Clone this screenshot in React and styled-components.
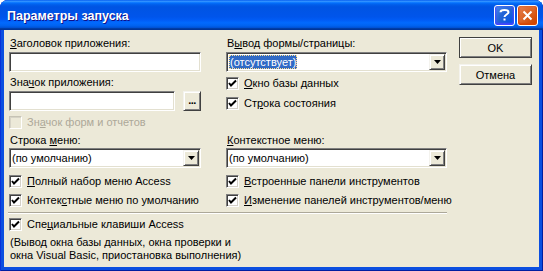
import React from "react";
import styled, { createGlobalStyle } from "styled-components";

const GlobalStyle = createGlobalStyle`
  html, body {
    margin: 0;
    padding: 0;
    overflow: hidden;
    background: #ffffff;
  }
  * {
    box-sizing: border-box;
  }
`;

const Window = styled.div`
  width: 543px;
  height: 271px;
  display: flex;
  flex-direction: column;
  background: #0b4fe0;
  border-radius: 8px 8px 0 0;
  box-shadow: inset 1px 0 #0831d9, inset -1px 0 #001ea0, inset 0 -1px #001ea0;
  font-family: "Liberation Sans", Arial, sans-serif;
  font-size: 11px;
  color: #000;
`;

const TitleBar = styled.div`
  height: 30px;
  flex: none;
  display: flex;
  align-items: center;
  justify-content: space-between;
  padding: 0 5px 0 7px;
  border-radius: 8px 8px 0 0;
  background: linear-gradient(
    to bottom,
    #0058ee 0%,
    #3593ff 4%,
    #288eff 6%,
    #127dff 8%,
    #036ffc 10%,
    #0262ee 14%,
    #0057e5 20%,
    #0054e3 24%,
    #0055eb 56%,
    #005bf5 66%,
    #026afe 76%,
    #0062ef 86%,
    #0052d6 92%,
    #0040ab 94%,
    #003092 100%
  );
`;

const Title = styled.div`
  color: #fff;
  font-weight: bold;
  font-size: 12.5px;
  text-shadow: 1px 1px #0f1089;
  padding-top: 1px;
`;

const Controls = styled.div`
  display: flex;
  gap: 2px;
`;

const CtrlButton = styled.div`
  width: 21px;
  height: 21px;
  border: 1px solid #fff;
  border-radius: 3px;
  display: flex;
  align-items: center;
  justify-content: center;
  background: ${({ $variant }) =>
    $variant === "close"
      ? "radial-gradient(circle at 90% 90%, #cc4600 0%, #dc6527 55%, #e58458 100%)"
      : "radial-gradient(circle at 90% 90%, #0054e9 0%, #2263d5 55%, #4f8cf0 100%)"};
  box-shadow: inset 0 -1px 2px 1px ${({ $variant }) => ($variant === "close" ? "#da4600" : "#4646ff")};
`;

const Body = styled.div`
  flex: 1;
  margin: 0 4px 4px 4px;
  background: #ece9d8;
  display: flex;
  padding: 6px 7px 0 5px;
`;

const Main = styled.div`
  width: 438px;
  display: flex;
  flex-direction: column;
`;

const Grid = styled.div`
  display: grid;
  grid-template-columns: 192px 221px;
  column-gap: 25px;
  margin-top: ${({ $mt }) => $mt || 0}px;
`;

const Column = styled.div`
  display: flex;
  flex-direction: column;
`;

const Label = styled.div`
  height: 14px;
  line-height: 14px;
  padding-left: 1px;
  white-space: nowrap;
  margin-top: ${({ $mt }) => $mt || 0}px;
`;

const Sunken = styled.div`
  height: 20px;
  background: #fff;
  border: 1px solid;
  border-color: #7f7f7f #fff #fff #7f7f7f;
  box-shadow: inset 1px 1px #404040, inset -1px -1px #e3e0d0;
  margin-top: ${({ $mt }) => $mt || 0}px;
`;

const TextBox = styled(Sunken)`
  width: ${({ $w }) => ($w ? `${$w}px` : "100%")};
`;

const InputRow = styled.div`
  display: flex;
  justify-content: space-between;
  margin-top: ${({ $mt }) => $mt || 0}px;
`;

const Raised = styled.div`
  background: #ece9d8;
  border: 1px solid;
  border-color: #f4f3ee #404040 #404040 #f4f3ee;
  box-shadow: inset 1px 1px #fff, inset -1px -1px #808080;
  display: flex;
  align-items: center;
  justify-content: center;
`;

const BrowseButton = styled(Raised)`
  width: 18px;
  height: 20px;
  font-weight: bold;
  font-size: 11px;
  letter-spacing: -0.5px;
  line-height: 1;
  padding-bottom: 2px;
`;

const Combo = styled(Sunken)`
  display: flex;
  align-items: center;
  padding: 1px;
`;

const ComboText = styled.div`
  flex: 1;
  padding-left: 1px;
  white-space: nowrap;
  line-height: 14px;
`;

const Selected = styled.span`
  background: #316ac5;
  color: #fff;
  outline: 1px dotted #ffde8c;
  outline-offset: -1px;
  padding: 0 1px;
  display: inline-block;
  line-height: 14px;
`;

const ComboArrow = styled(Raised)`
  width: 16px;
  height: 16px;
`;

const CheckRow = styled.div`
  display: flex;
  align-items: center;
  gap: 5px;
  height: 14px;
  white-space: nowrap;
  color: ${({ $disabled }) => ($disabled ? "#aca899" : "#000")};
  margin-top: ${({ $mt }) => $mt || 0}px;
`;

const CheckBox = styled.div`
  width: 13px;
  height: 13px;
  flex: none;
  background: ${({ $disabled }) => ($disabled ? "#ece9d8" : "#fff")};
  border: 1px solid;
  border-color: ${({ $disabled }) =>
    $disabled ? "#c6c3b4 #fff #fff #c6c3b4" : "#808080 #fff #fff #808080"};
  box-shadow: ${({ $disabled }) =>
    $disabled
      ? "inset 1px 1px #d6d3c6, inset -1px -1px #ece9d8"
      : "inset 1px 1px #404040, inset -1px -1px #d4d0c8"};
  display: flex;
  align-items: center;
  justify-content: center;
`;

const Separator = styled.div`
  height: 2px;
  margin: 5px 0 0 -1px;
  border-top: 1px solid #aca899;
  border-bottom: 1px solid #fff;
`;

const Note = styled.div`
  margin-top: 5px;
  line-height: 13px;
  padding-left: 1px;
`;

const ButtonColumn = styled.div`
  margin-left: 12px;
  padding-top: 1px;
  display: flex;
  flex-direction: column;
  gap: 6px;
`;

const PushButton = styled(Raised)`
  width: 73px;
  height: 21px;
  border-color: ${({ $default }) =>
    $default ? "#404040" : "#f4f3ee #404040 #404040 #f4f3ee"};
`;

const Arrow = () => (
  <svg width="7" height="4" viewBox="0 0 7 4">
    <polygon points="0,0 7,0 3.5,4" fill="#000" />
  </svg>
);

const Tick = () => (
  <svg width="9" height="9" viewBox="0 0 9 9">
    <polyline points="1,4 3,6.5 8,1.5" fill="none" stroke="#000" strokeWidth="2" />
  </svg>
);

const Check = ({ checked, disabled, mt, children }) => (
  <CheckRow $disabled={disabled} $mt={mt}>
    <CheckBox $disabled={disabled}>{checked && <Tick />}</CheckBox>
    <span>{children}</span>
  </CheckRow>
);

const Select = ({ mt, children }) => (
  <Combo $mt={mt}>
    <ComboText>{children}</ComboText>
    <ComboArrow>
      <Arrow />
    </ComboArrow>
  </Combo>
);

const App = () => (
  <>
    <GlobalStyle />
    <Window>
      <TitleBar>
        <Title>Параметры запуска</Title>
        <Controls>
          <CtrlButton $variant="help">
            <svg width="11" height="14" viewBox="0 0 11 14">
              <path
                d="M1.5 4.2 C1.5 1.2 9.5 1.2 9.5 4.2 C9.5 6.4 5.5 6.6 5.5 9"
                fill="none"
                stroke="#fff"
                strokeWidth="2"
              />
              <rect x="4.5" y="10.5" width="2" height="2" fill="#fff" />
            </svg>
          </CtrlButton>
          <CtrlButton $variant="close">
            <svg width="11" height="11" viewBox="0 0 11 11">
              <path d="M1.5 1.5 L9.5 9.5 M9.5 1.5 L1.5 9.5" stroke="#fff" strokeWidth="2" />
            </svg>
          </CtrlButton>
        </Controls>
      </TitleBar>
      <Body>
        <Main>
          <Grid>
            <Column>
              <Label>
                <u>З</u>аголовок приложения:
              </Label>
              <TextBox $mt={2} />
              <Label $mt={3}>
                Зна<u>ч</u>ок приложения:
              </Label>
              <InputRow $mt={2}>
                <TextBox $w={166} />
                <BrowseButton>...</BrowseButton>
              </InputRow>
              <Check disabled mt={4}>
                Зн<u>а</u>чок форм и отчетов
              </Check>
            </Column>
            <Column>
              <Label>
                В<u>ы</u>вод формы/страницы:
              </Label>
              <Select mt={2}>
                <Selected>(отсутствует)</Selected>
              </Select>
              <Check checked mt={4}>
                <u>О</u>кно базы данных
              </Check>
              <Check checked mt={6}>
                Ст<u>р</u>ока состояния
              </Check>
            </Column>
          </Grid>
          <Grid $mt={4}>
            <Column>
              <Label>
                Строка <u>м</u>еню:
              </Label>
              <Select mt={1}>(по умолчанию)</Select>
              <Check checked mt={6}>
                <u>П</u>олный набор меню Access
              </Check>
              <Check checked mt={5}>
                Контек<u>с</u>тные меню по умолчанию
              </Check>
            </Column>
            <Column>
              <Label>
                <u>К</u>онтекстное меню:
              </Label>
              <Select mt={1}>(по умолчанию)</Select>
              <Check checked mt={6}>
                <u>В</u>строенные панели инструментов
              </Check>
              <Check checked mt={5}>
                <u>И</u>зменение панелей инструментов/меню
              </Check>
            </Column>
          </Grid>
          <Separator />
          <Check checked mt={3}>
            Спе<u>ц</u>иальные клавиши Access
          </Check>
          <Note>
            (Вывод окна базы данных, окна проверки и
            <br />
            окна Visual Basic, приостановка выполнения)
          </Note>
        </Main>
        <ButtonColumn>
          <PushButton $default>OK</PushButton>
          <PushButton>Отмена</PushButton>
        </ButtonColumn>
      </Body>
    </Window>
  </>
);

export default App;
